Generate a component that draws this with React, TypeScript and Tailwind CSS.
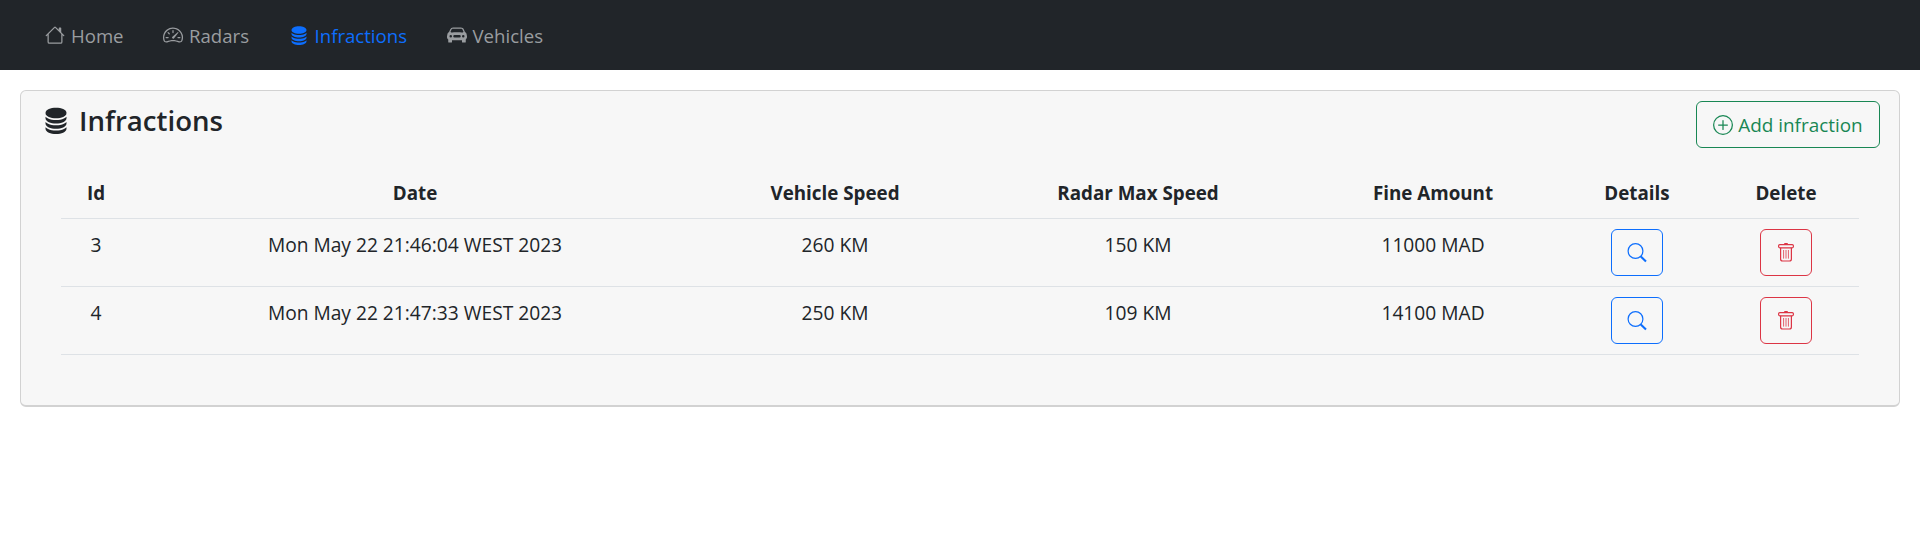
import { BsCarFrontFill, BsDatabaseFill, BsHouse, BsPlusCircle, BsSpeedometer2 } from "react-icons/bs";

const links = [
    { label: "Home", icon: <BsHouse />, active: false },
    { label: "Radars", icon: <BsSpeedometer2 />, active: false },
    { label: "Infractions", icon: <BsDatabaseFill />, active: true },
    { label: "Vehicles", icon: <BsCarFrontFill />, active: false },
];

const rows = [
    { id: 3, date: "Mon May 22 21:46:04 WEST 2023", speed: "260 KM", max: "150 KM", fine: "11000 MAD" },
    { id: 4, date: "Mon May 22 21:47:33 WEST 2023", speed: "250 KM", max: "109 KM", fine: "14100 MAD" },
];

const headers = ["Id", "Date", "Vehicle Speed", "Radar Max Speed", "Fine Amount", "Details", "Delete"];

const SearchIcon = () => (
    <svg width="20" height="20" viewBox="0 0 20 20" fill="none" stroke="currentColor">
        <circle cx="8.5" cy="8" r="7.4" strokeWidth="1.2" />
        <path d="M13.8 13.4 19 18.4" strokeWidth="2.1" />
    </svg>
);

const TrashIcon = () => (
    <svg width="16" height="19" viewBox="0 0 16 19" fill="currentColor">
        <rect x="6" y="0" width="4" height="2" rx="1" />
        <rect x="0.6" y="1.6" width="14.8" height="3.2" rx="1.2" fill="none" stroke="currentColor" strokeWidth="1.2" />
        <path d="M2.6 4.8V16a2 2 0 0 0 2 2h6.8a2 2 0 0 0 2-2V4.8" fill="none" stroke="currentColor" strokeWidth="1.2" />
        <rect x="5" y="7" width="1.1" height="8.6" opacity="0.7" />
        <rect x="7.45" y="7" width="1.1" height="8.6" opacity="0.7" />
        <rect x="9.9" y="7" width="1.1" height="8.6" opacity="0.7" />
    </svg>
);

const App = () => {
    return (
        <div className="min-h-[549px] bg-white font-['Open_Sans','Liberation_Sans',sans-serif] text-[#212529]">
            <nav className="flex h-[70px] items-center gap-[39.5px] bg-[#212529] pl-[45px] pt-[1px] text-[18.6px]">
                {links.map((link) => (
                    <a
                        key={link.label}
                        href="#"
                        className={`flex items-center gap-[6px] ${link.active ? "text-[#0d6efd]" : "text-[#9a9da0]"}`}
                    >
                        <span className="text-[20px]">{link.icon}</span>
                        {link.label}
                    </a>
                ))}
            </nav>
            <div className="px-5 pt-5">
                <div className="rounded-md border border-b-2 border-[#d2d2d2] bg-[#f7f7f7] pb-[50px] pt-[10px]">
                    <div className="flex items-start justify-between pl-[21px] pr-[19px]">
                        <h3 className="flex items-center gap-[9px] text-[27.6px] font-semibold leading-[38px]">
                            <BsDatabaseFill className="text-[28px]" />
                            Infractions
                        </h3>
                        <button className="flex h-[47px] w-[184px] items-center justify-center gap-[5px] rounded-md border border-[#198754] pt-[1px] text-[18.9px] text-[#198754]">
                            <BsPlusCircle className="text-[20px]" />
                            Add infraction
                        </button>
                    </div>
                    <div className="pl-10 pr-10">
                        <table className="w-[1798px] table-fixed border-separate border-spacing-0 text-center text-[19.2px]">
                            <colgroup>
                                <col className="w-[70px]" />
                                <col className="w-[568px]" />
                                <col className="w-[272px]" />
                                <col className="w-[334px]" />
                                <col className="w-[256px]" />
                                <col className="w-[152px]" />
                                <col className="w-[146px]" />
                            </colgroup>
                            <thead>
                                <tr>
                                    {headers.map((h) => (
                                        <th key={h} className="border-b border-[#dee2e6] pb-[11px] pt-[32px] text-[18.8px] font-bold leading-[27px]">
                                            {h}
                                        </th>
                                    ))}
                                </tr>
                            </thead>
                            <tbody>
                                {rows.map((row) => (
                                    <tr key={row.id} className="h-[68px] leading-[27px]">
                                        <td className="border-b border-[#dee2e6] pb-[16px]">{row.id}</td>
                                        <td className="border-b border-[#dee2e6] pb-[16px]">{row.date}</td>
                                        <td className="border-b border-[#dee2e6] pb-[16px]">{row.speed}</td>
                                        <td className="border-b border-[#dee2e6] pb-[16px]">{row.max}</td>
                                        <td className="border-b border-[#dee2e6] pb-[16px]">{row.fine}</td>
                                        <td className="border-b border-[#dee2e6]">
                                            <button className="inline-flex h-[47px] w-[52px] items-center justify-center rounded-md border border-[#0d6efd] align-middle text-[#0d6efd]">
                                                <SearchIcon />
                                            </button>
                                        </td>
                                        <td className="border-b border-[#dee2e6]">
                                            <button className="inline-flex h-[47px] w-[52px] items-center justify-center rounded-md border border-[#dc3545] align-middle text-[#dc3545]">
                                                <TrashIcon />
                                            </button>
                                        </td>
                                    </tr>
                                ))}
                            </tbody>
                        </table>
                    </div>
                </div>
            </div>
        </div>
    );
};

export default App;
